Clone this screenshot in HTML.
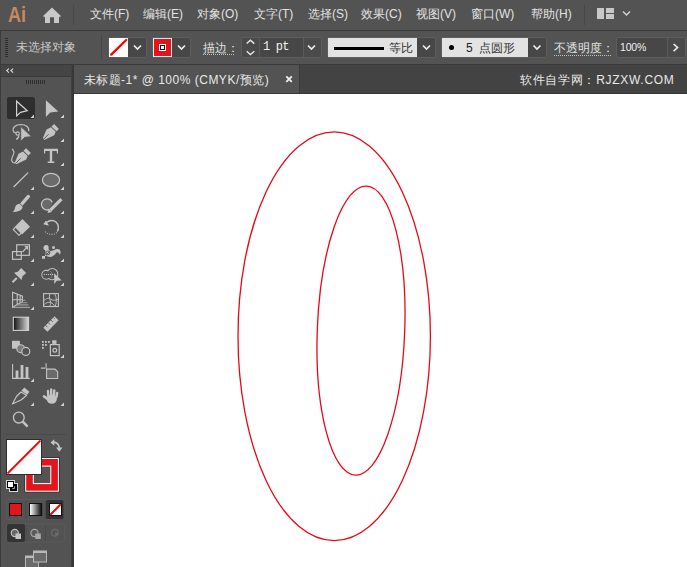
<!DOCTYPE html>
<html><head><meta charset="utf-8">
<style>
*{margin:0;padding:0;box-sizing:border-box}
html,body{width:687px;height:567px;overflow:hidden;background:#535353;font-family:"Liberation Sans",sans-serif;}
.a{position:absolute}
.t{position:absolute;white-space:nowrap;font-size:12px;line-height:14px;color:#e2e2e2}
.grp{position:absolute;border:1px solid #5d5d5d;border-radius:2px;background:#4a4a4a}
.dd{position:absolute;background:#474747}
</style></head><body>
<!-- menu bar -->
<div class="a" style="left:0;top:30px;width:687px;height:1px;background:#3b3b3b"></div>
<div class="t" style="left:8px;top:3.5px;font-size:22px;line-height:22px;color:#c48a60;font-weight:bold;transform:scaleX(0.82);transform-origin:0 0">Ai</div>
<svg class="a" style="left:0;top:0" width="687" height="30">
<path d="M52 7.6 L61.2 16.2 L59 16.9 L59 23 L54 23 L54 17.3 L50 17.3 L50 23 L45 23 L45 16.9 L42.8 16.2 Z" fill="#c8c8c8"/>
<rect x="73" y="5" width="1" height="20" fill="#474747"/>
<rect x="584" y="5" width="1" height="20" fill="#474747"/>
<rect x="597" y="8" width="7" height="11" fill="#c8c8c8"/>
<rect x="606" y="8" width="8" height="5" fill="#c8c8c8"/>
<rect x="606" y="14" width="8" height="5" fill="#c8c8c8"/>
<path d="M623 11.5 L626.5 15 L630 11.5" stroke="#d0d0d0" stroke-width="1.5" fill="none"/>
</svg>
<div class="t" style="left:90px;top:7px">文件(F)</div>
<div class="t" style="left:143px;top:7px">编辑(E)</div>
<div class="t" style="left:197px;top:7px">对象(O)</div>
<div class="t" style="left:254px;top:7px">文字(T)</div>
<div class="t" style="left:308px;top:7px">选择(S)</div>
<div class="t" style="left:361px;top:7px">效果(C)</div>
<div class="t" style="left:416px;top:7px">视图(V)</div>
<div class="t" style="left:471px;top:7px">窗口(W)</div>
<div class="t" style="left:531px;top:7px">帮助(H)</div>

<!-- options bar -->
<div class="a" style="left:0;top:31px;width:1px;height:33px;background:#3b3b3b"></div>
<div class="a" style="left:0;top:64px;width:687px;height:1px;background:#3a3a3a"></div>
<svg class="a" style="left:0;top:31px" width="687" height="33">
<g fill="#2e2e2e">
<rect x="5" y="7" width="3" height="1"/><rect x="5" y="9" width="3" height="1"/><rect x="5" y="11" width="3" height="1"/>
<rect x="5" y="13" width="3" height="1"/><rect x="5" y="15" width="3" height="1"/><rect x="5" y="17" width="3" height="1"/>
<rect x="5" y="19" width="3" height="1"/><rect x="5" y="21" width="3" height="1"/><rect x="5" y="23" width="3" height="1"/>
<rect x="5" y="25" width="3" height="1"/>
</g>
<rect x="101" y="4" width="1" height="25" fill="#474747"/>
</svg>
<div class="t" style="left:16px;top:39.5px;color:#c8c8c8">未选择对象</div>

<!-- fill swatch -->
<div class="grp" style="left:108px;top:37px;width:39px;height:21px;background:#474747"></div>
<div class="a" style="left:109px;top:38px;width:19px;height:19px;background:#fff"></div>
<svg class="a" style="left:0;top:0" width="687" height="65">
<line x1="111.2" y1="54.6" x2="126.2" y2="40" stroke="#ff0000" stroke-width="2.3" stroke-linecap="round"/>
<path d="M134 45.5 L137.5 49 L141 45.5" stroke="#ececec" stroke-width="1.7" fill="none"/>
<path d="M178 45.5 L181.5 49 L185 45.5" stroke="#ececec" stroke-width="1.7" fill="none"/>
</svg>
<!-- stroke swatch -->
<div class="grp" style="left:152px;top:37px;width:39px;height:21px;background:#474747"></div>
<div class="a" style="left:153px;top:38px;width:19px;height:19px;background:#e8e8e8"></div>
<div class="a" style="left:154px;top:39px;width:17px;height:17px;background:#e3141b"></div>
<div class="a" style="left:159px;top:44px;width:7px;height:7px;background:#fff"></div>
<div class="a" style="left:160px;top:45px;width:5px;height:5px;background:#1a1a1a"></div>
<div class="a" style="left:161px;top:46px;width:3px;height:3px;background:#f0f0f0"></div>
<svg class="a" style="left:0;top:0" width="687" height="65">
<path d="M178 45.5 L181.5 49 L185 45.5" stroke="#ececec" stroke-width="1.7" fill="none"/>
</svg>

<div class="t" style="left:203px;top:41px">描边：</div>
<svg class="a" style="left:0;top:0" width="687" height="65">
<line x1="203" y1="54.5" x2="235" y2="54.5" stroke="#c0c0c0" stroke-width="1" stroke-dasharray="1 1"/>
<line x1="554" y1="55.5" x2="611" y2="55.5" stroke="#c0c0c0" stroke-width="1" stroke-dasharray="1 1"/>
</svg>

<!-- stroke weight -->
<div class="grp" style="left:241px;top:37px;width:81px;height:21px;background:#4a4a4a"></div>
<div class="a" style="left:259px;top:38px;width:1px;height:19px;background:#5a5a5a"></div>
<div class="dd" style="left:260px;top:38px;width:43px;height:19px;background:#474747"></div>
<div class="a" style="left:303px;top:38px;width:1px;height:19px;background:#5a5a5a"></div>
<div class="t" style="left:263px;top:40px;font-family:'Liberation Mono',monospace;font-size:12px;letter-spacing:-0.8px;color:#f0f0f0">1 pt</div>
<svg class="a" style="left:0;top:0" width="687" height="65">
<path d="M246.7 43.6 L250.4 40.2 L254.3 43.6" stroke="#e8e8e8" stroke-width="1.4" fill="none"/>
<path d="M246.7 51.2 L250.4 54.6 L254.3 51.2" stroke="#e8e8e8" stroke-width="1.4" fill="none"/>
<path d="M308 45.5 L311.5 49 L315 45.5" stroke="#ececec" stroke-width="1.7" fill="none"/>
</svg>

<!-- stroke profile -->
<div class="grp" style="left:327px;top:37px;width:109px;height:21px;background:#474747"></div>
<div class="a" style="left:328px;top:38px;width:89px;height:19px;background:#e3e3e3"></div>
<div class="a" style="left:334px;top:47px;width:50px;height:3px;background:#000"></div>
<div class="t" style="left:389px;top:41px;color:#333">等比</div>
<svg class="a" style="left:0;top:0" width="687" height="65">
<path d="M423 45.5 L426.5 49 L430 45.5" stroke="#ececec" stroke-width="1.7" fill="none"/>
</svg>

<!-- brush -->
<div class="grp" style="left:441px;top:37px;width:106px;height:21px;background:#474747"></div>
<div class="a" style="left:442px;top:38px;width:86px;height:19px;background:#e3e3e3"></div>
<div class="a" style="left:449px;top:45px;width:5px;height:5px;border-radius:50%;background:#000"></div>
<div class="t" style="left:466px;top:41px;color:#222">5</div>
<div class="t" style="left:479px;top:41px;color:#333">点圆形</div>
<svg class="a" style="left:0;top:0" width="687" height="65">
<path d="M533.5 45.5 L537 49 L540.5 45.5" stroke="#ececec" stroke-width="1.7" fill="none"/>
</svg>

<div class="t" style="left:554px;top:41px">不透明度：</div>
<!-- opacity -->
<div class="grp" style="left:616px;top:37px;width:70px;height:21px;background:#474747"></div>
<div class="a" style="left:667px;top:38px;width:1px;height:19px;background:#5a5a5a"></div>
<div class="a" style="left:668px;top:38px;width:17px;height:19px;background:#4a4a4a;border-radius:0 2px 2px 0"></div>
<div class="t" style="left:620px;top:40px;font-size:10.5px;color:#f0f0f0;letter-spacing:-0.2px">100%</div>
<svg class="a" style="left:0;top:0" width="687" height="65">
<path d="M673.6 44 L677.6 47.6 L673.6 51.2" stroke="#ececec" stroke-width="1.6" fill="none"/>
</svg>

<!-- toolbar -->
<div class="a" style="left:0;top:65px;width:71px;height:11px;background:#454545"></div>
<div class="a" style="left:0;top:76px;width:71px;height:1px;background:#3a3a3a"></div>
<div class="a" style="left:0;top:65px;width:1px;height:502px;background:#3c3c3c"></div>
<div class="a" style="left:71px;top:65px;width:1px;height:502px;background:#404040"></div>
<div class="a" style="left:72px;top:65px;width:2px;height:502px;background:#383838"></div>
<svg class="a" style="left:0;top:0" width="74" height="567">
<path d="M9 68 L5.8 70.6 L9 73.2 L9 71.9 L7.5 70.6 L9 69.3 Z M13.2 68 L10 70.6 L13.2 73.2 L13.2 71.9 L11.7 70.6 L13.2 69.3 Z" fill="#dcdcdc"/>
<g fill="#2f2f2f"><rect x="26" y="80" width="1" height="4"/><rect x="28" y="80" width="1" height="4"/><rect x="30" y="80" width="1" height="4"/><rect x="32" y="80" width="1" height="4"/><rect x="34" y="80" width="1" height="4"/><rect x="36" y="80" width="1" height="4"/><rect x="38" y="80" width="1" height="4"/><rect x="40" y="80" width="1" height="4"/><rect x="42" y="80" width="1" height="4"/><rect x="44" y="80" width="1" height="4"/></g>
<rect x="7" y="97" width="28" height="22" rx="2.5" fill="#2e2e2e"/>
<!-- corner triangles -->
<g fill="#d2d2d2">
<path d="M34 114.5V118H30.5Z"/><path d="M64 114.5V118H60.5Z"/>
<path d="M64 138.5V142H60.5Z"/>
<path d="M64 162.5V166H60.5Z"/>
<path d="M34 186.5V190H30.5Z"/><path d="M64 186.5V190H60.5Z"/>
<path d="M34 210.5V214H30.5Z"/><path d="M64 210.5V214H60.5Z"/>
<path d="M34 234.5V238H30.5Z"/><path d="M64 234.5V238H60.5Z"/>
<path d="M34 258.5V262H30.5Z"/><path d="M64 258.5V262H60.5Z"/>
<path d="M34 282.5V286H30.5Z"/><path d="M64 282.5V286H60.5Z"/>
<path d="M34 306.5V310H30.5Z"/>
<path d="M64 354.5V358H60.5Z"/>
<path d="M34 378.5V382H30.5Z"/>
<path d="M34 402.5V406H30.5Z"/><path d="M64 402.5V406H60.5Z"/>
</g>
<g fill="#c4c4c4" stroke="none">
<!-- selection -->
<path d="M16.6 101.2 L16.6 116 L20.6 112.3 L27.2 110.7 Z" fill="none" stroke="#d0d0d0" stroke-width="1.2" stroke-linejoin="miter"/>
<!-- direct selection -->
<path d="M45.9 100.3 L45.9 117 L50.2 112.6 L58.3 111.4 Z"/>
<!-- lasso -->
<path d="M28.6 131.2 C29.6 127.5 26 124.6 20.7 124.5 C15.5 124.6 12.3 127.5 13.1 130.6 C13.5 132 14.5 132.8 16 133" fill="none" stroke="#c4c4c4" stroke-width="1.2"/>
<circle cx="17.6" cy="133.6" r="1.7" fill="none" stroke="#c4c4c4" stroke-width="1.1"/>
<path d="M18.8 135.2 C18.9 137 17.8 138.6 16.2 139.6" fill="none" stroke="#c4c4c4" stroke-width="1.2"/>
<path d="M20.8 126.6 L20.8 141.2 L24.6 137.3 L31.4 136.6 Z" stroke="#535353" stroke-width="0.7"/>
<!-- pen -->
<path d="M54.1 124 L58.9 128.9 L56.4 131.3 L51.5 126.6 Z"/>
<path d="M51 127.2 L55.7 131.8 L54.2 135.3 L44.3 140 L42.9 138 L46.5 129.5 Z"/>
<path d="M43.9 139 L48.6 134.2" stroke="#535353" stroke-width="0.9"/>
<!-- curvature pen -->
<g transform="translate(-28 24.2)">
<path d="M54.1 124 L58.9 128.9 L56.4 131.3 L51.5 126.6 Z"/>
<path d="M51 127.2 L55.7 131.8 L54.2 135.3 L44.3 140 L42.9 138 L46.5 129.5 Z"/>
<path d="M43.9 139 L48.6 134.2" stroke="#535353" stroke-width="0.9"/>
</g>
<path d="M12 149 C14 150.5 14.5 152 13.5 154.5 C11.5 158 11 161 13 162.5 C14 163 15 163 16 162.5" fill="none" stroke="#c4c4c4" stroke-width="1.1"/>
<!-- type -->
<path d="M44 148.8 H58 V153.5 H56.8 V151 H52.2 V161.6 H54.3 V163 H47.7 V161.6 H49.8 V151 H45.2 V153.5 H44 Z"/>
<!-- line -->
<path d="M13.6 187 L28.1 172.6" stroke="#c4c4c4" stroke-width="1.3"/>
<!-- ellipse -->
<ellipse cx="51" cy="180" rx="8.6" ry="6.6" fill="#6b6b6b" stroke="#c4c4c4" stroke-width="1.2"/>
<!-- paintbrush -->
<path d="M28.4 196.4 L21.5 204.3" stroke="#c4c4c4" stroke-width="3.3" stroke-linecap="round"/>
<path d="M19.8 203.8 C17.5 203.8 15.6 205.2 15.1 207.4 C14.6 209.5 13.9 210.9 12.7 212 C16 212.3 19.6 211.5 21.4 209.6 C22.9 207.9 22.7 205.8 22.2 205.1 Z"/>
<path d="M19.6 203.4 L23 206.6" stroke="#535353" stroke-width="0.9"/>
<!-- shaper -->
<path d="M50.5 208.8 A5.6 5.6 0 1 1 52.2 202.3" fill="#6a6a6a" stroke="#c4c4c4" stroke-width="1.3"/>
<path d="M61.6 199 L50.4 210.2" stroke="#535353" stroke-width="5"/>
<path d="M61.4 199.2 L50.4 210.2" stroke="#c4c4c4" stroke-width="3.3"/>
<path d="M48.7 208.6 L52 211.9 L47.6 212.9 Z"/>
<!-- eraser -->
<path d="M22.4 219.1 L30 226.7 L22 234.4 L15.6 228 L14.6 227 Z"/>
<path d="M15.3 227.3 L13.3 229.6 L18.9 235.3 L21.2 233.3" fill="none" stroke="#c4c4c4" stroke-width="1.2"/>
<!-- rotate -->
<path d="M47 222.2 C49.5 220 53.5 219.8 56 222 C58.8 224.5 59 229 57.3 231.5" fill="none" stroke="#c4c4c4" stroke-width="1.4"/>
<path d="M56.8 232.5 C54 235 48 235.5 44.5 231" fill="none" stroke="#c4c4c4" stroke-width="1.1" stroke-dasharray="0.9 1.5"/>
<path d="M43.3 224.3 L46 220.5 L49 225.8 Z"/>
<!-- scale -->
<rect x="16.7" y="244.8" width="12.7" height="10.5" fill="none" stroke="#c4c4c4" stroke-width="1.2"/>
<rect x="12.5" y="251.6" width="8.8" height="7.7" fill="none" stroke="#c4c4c4" stroke-width="1.2"/>
<path d="M22.5 252 L27.3 247" stroke="#c4c4c4" stroke-width="1.2"/>
<path d="M24.2 246.2 L28.2 246 L28 250 Z"/>
<!-- puppet warp -->
<path d="M43.5 249 C43 246 45 244.5 47 245 C48.5 245.5 49 247 48.5 249 C49 251 51 251.5 53 250.5 C55 249 57 248.5 59 249.3 C60.8 250.3 61 253 59.8 255 C59.2 253 58 252 56.5 252.5 C55 254.5 53 256.8 50 257 C47 257 45 255.5 45.5 252.5 C45.8 251 45 250 43.5 249 Z"/>
<path d="M45 256.2 L52.3 248.8" stroke="#535353" stroke-width="1"/>
<path d="M43.5 257.5 L46 255" stroke="#c4c4c4" stroke-width="1"/>
<rect x="42" y="256" width="3" height="2.8"/>
<circle cx="47.9" cy="252.9" r="1.9" fill="none" stroke="#535353" stroke-width="0.9"/>
<circle cx="53.5" cy="247.6" r="1.5"/>
<!-- pin -->
<path d="M21.1 268 L26.2 273.1 L22.5 276.2 L21.5 280 L14.1 272.8 L17.8 271.8 Z"/>
<path d="M16.8 278 L12.5 282.3" stroke="#c4c4c4" stroke-width="2"/>
<!-- shape builder -->
<circle cx="46.3" cy="274.8" r="4.4" fill="none" stroke="#c4c4c4" stroke-width="1.1"/>
<circle cx="52.2" cy="274.2" r="5.6" fill="none" stroke="#c4c4c4" stroke-width="1.1"/>
<circle cx="46.3" cy="274.8" r="3.8" fill="#535353"/>
<circle cx="52.2" cy="274.2" r="5" fill="#535353"/>
<path d="M50 271 A4.4 4.4 0 0 1 50 278.5" fill="none" stroke="#8a8a8a" stroke-width="0.8"/>
<g fill="#c4c4c4"><circle cx="44.3" cy="274.4" r="0.6"/><circle cx="46.4" cy="274.4" r="0.6"/><circle cx="48.4" cy="274.4" r="0.6"/><circle cx="50.5" cy="274.4" r="0.6"/><circle cx="52.6" cy="274.4" r="0.6"/></g>
<path d="M54.1 273.3 L54.3 284 L56.8 280.8 L61.8 280.5 Z"/>
<!-- perspective grid -->
<path d="M12.6 292.2 L22.4 296.2 L22.4 301.8 L12.6 307.3 Z M17.2 294.1 V304.6 M20.1 295.3 V303 M12.6 299.8 L22.4 299.6" fill="none" stroke="#c4c4c4" stroke-width="1.1"/>
<path d="M22.5 300.3 H25.5 M20.2 302.8 H27.2 M17.4 304.9 H28.4 M13 307.4 H30" stroke="#9c9c9c" stroke-width="1.1"/>
<!-- mesh -->
<rect x="43.6" y="293.6" width="14.8" height="12.9" fill="none" stroke="#c4c4c4" stroke-width="1.1"/>
<path d="M44 300.5 C46.5 298.3 48.5 297.5 50.5 299 C52.5 300.8 55.5 300.6 58 299.3 M49.8 294 C48.6 297 50.2 300 50.6 302 C51 304 50 305.5 49.2 306.5 M54.8 294 C56.6 297.5 57 301.5 55.2 306.5 M44 304.6 C46 302.6 48.2 302 50.6 302.5 C52.6 303 54 304.8 54.8 306.5" fill="none" stroke="#c4c4c4" stroke-width="0.9"/>
<!-- gradient -->
<defs><linearGradient id="g1" x1="0" x2="1" y1="0" y2="0"><stop offset="0" stop-color="#111"/><stop offset="1" stop-color="#d8d8d8"/></linearGradient>
<linearGradient id="g2" x1="0" x2="1" y1="0" y2="0"><stop offset="0" stop-color="#fff"/><stop offset="1" stop-color="#111"/></linearGradient></defs>
<rect x="13.3" y="317.2" width="15.3" height="13.2" fill="url(#g1)" stroke="#d0d0d0" stroke-width="1.1"/>
<!-- ruler -->
<path d="M47.4 331.8 L43.3 327.7 L54.5 316.2 L58.6 320.3 Z"/>
<path d="M45.6 325.4 L47.4 327.2 M48.2 322.7 L50 324.5 M50.8 320 L52.6 321.8 M53.4 317.4 L54.6 318.6" stroke="#535353" stroke-width="0.9"/>
<!-- blend -->
<rect x="12" y="340.8" width="7.9" height="7.9"/>
<circle cx="20.7" cy="348.7" r="3.9" fill="#7a7a7a" stroke="#c4c4c4" stroke-width="1.1"/>
<circle cx="25.8" cy="351.4" r="4" fill="#535353" stroke="#c4c4c4" stroke-width="1.2"/>
<!-- symbol sprayer -->
<rect x="42" y="341" width="1.8" height="1.8"/><rect x="45" y="341" width="1.8" height="1.8"/><rect x="48" y="341" width="1.8" height="1.8"/>
<rect x="42" y="344" width="1.8" height="1.8"/><rect x="45" y="344" width="1.8" height="1.8"/>
<rect x="42" y="347" width="1.8" height="1.8"/>
<rect x="52.2" y="340.3" width="4.3" height="3.6"/>
<rect x="50.4" y="344.6" width="8.8" height="11" fill="none" stroke="#c4c4c4" stroke-width="1.2"/>
<circle cx="54.8" cy="350.3" r="1.9" fill="none" stroke="#c4c4c4" stroke-width="1.2"/>
<!-- column graph -->
<path d="M12.6 364 V378.4 H29.8" fill="none" stroke="#c4c4c4" stroke-width="1.1"/>
<rect x="15.6" y="370.5" width="2.8" height="7.5"/><rect x="20.6" y="365" width="2.8" height="13"/><rect x="25.6" y="367" width="2.8" height="11"/>
<!-- artboard -->
<path d="M46.1 363.3 V369 M40.9 368.1 H45" stroke="#c4c4c4" stroke-width="1.1"/>
<path d="M46.6 369.1 H55 L57.7 371.8 V378.5 H46.6 Z" fill="#6a6a6a" stroke="#c4c4c4" stroke-width="1.1"/>
<!-- pencil / slice -->
<path d="M24.3 387.5 L29.4 391.8 L27.2 394.8 L21.4 390.8 Z"/>
<path d="M21 392 L26.6 395.3 L21.5 399.8 L12.4 404 L16.6 396.2 Z" fill="none" stroke="#c4c4c4" stroke-width="1.2" stroke-linejoin="round"/>
<!-- hand -->
<g stroke="#c4c4c4" stroke-linecap="round" stroke-width="2.4">
<path d="M48.3 397 L48 391 M51.2 396 L51.2 389.5 M54 396 L54.3 390.5 M56.5 397 L57.2 393"/>
<path d="M49 400 L44 396.4" stroke-width="2.6"/>
</g>
<ellipse cx="51.8" cy="399.2" rx="5" ry="4.6"/>
<!-- zoom -->
<circle cx="18.8" cy="417.6" r="5.4" fill="none" stroke="#c4c4c4" stroke-width="1.3"/>
<path d="M22.8 421.6 L27.6 426.6" stroke="#c4c4c4" stroke-width="2.4"/>
</g>
<rect x="6" y="434" width="60" height="1" fill="#4a4a4a"/>
<!-- fill & stroke -->
<rect x="24.4" y="457.2" width="35.3" height="35.3" fill="#2e2e2e"/>
<rect x="25.2" y="458" width="33.7" height="33.7" fill="#fff"/>
<rect x="26.2" y="459" width="31.7" height="31.7" fill="#e3141b"/>
<rect x="32.8" y="465.6" width="18.5" height="18.5" fill="#fff"/>
<rect x="33.8" y="466.6" width="16.5" height="16.5" fill="#535353"/>
<rect x="6" y="439" width="36" height="36" fill="#2e2e2e"/>
<rect x="7" y="440" width="34" height="34" fill="#fff"/>
<path d="M7.5 473.5 L40.5 440.5" stroke="#ff0000" stroke-width="1.8"/>
<!-- swap -->
<path d="M53 442.3 C56.5 442 59 444.5 59.3 448" fill="none" stroke="#c4c4c4" stroke-width="1.8"/>
<path d="M50.5 442.5 L54.3 439.3 L54.3 445.7 Z M56 447.5 L62.5 447.5 L59.3 451.8 Z" fill="#c4c4c4"/>
<!-- default -->
<rect x="6" y="480" width="9" height="9" fill="#d4d4d4"/><rect x="9" y="483" width="9" height="9" fill="#d4d4d4"/>
<rect x="7" y="481" width="7" height="7" fill="#000"/><rect x="10" y="484" width="7" height="7" fill="#000"/>
<rect x="8" y="482" width="5" height="5" fill="#fff"/>
<path d="M14.6 486.2 V488.6 H12.2" fill="none" stroke="#d8d8d8" stroke-width="0.8"/>
<!-- color mode group -->
<rect x="6.5" y="499.5" width="57" height="19.5" rx="2" fill="#535353" stroke="#5b5b5b" stroke-width="1"/>
<rect x="46" y="500" width="17.5" height="19" rx="1.5" fill="#333"/>
<rect x="25.3" y="500" width="1" height="19" fill="#4b4b4b"/><rect x="45" y="500" width="1" height="19" fill="#4b4b4b"/>
<rect x="9" y="503" width="13" height="13" fill="#111"/><rect x="10" y="504" width="11" height="11" fill="#e3141b"/>
<rect x="29" y="503" width="13.2" height="13" fill="#111"/><rect x="30" y="504" width="11.2" height="11" fill="url(#g2)"/>
<rect x="49" y="503" width="13" height="13" fill="#111"/><rect x="50" y="504" width="11" height="11" fill="#fff"/>
<path d="M50.3 514.7 L60.7 504.3" stroke="#ff0000" stroke-width="2"/>
<!-- draw mode group -->
<rect x="7" y="524" width="57.5" height="18" rx="2" fill="#535353" stroke="#5a5a5a" stroke-width="1"/>
<rect x="7" y="524" width="18" height="18" rx="2" fill="#333"/>
<rect x="25.8" y="525" width="1" height="16" fill="#4b4b4b"/><rect x="45" y="525" width="1" height="16" fill="#4b4b4b"/>
<circle cx="14.8" cy="533" r="3.6" fill="#666" stroke="#c4c4c4" stroke-width="1.1"/>
<rect x="15.5" y="533.5" width="5.5" height="5.5" fill="#c4c4c4"/>
<circle cx="34.5" cy="533" r="3.6" fill="#5a5a5a" stroke="#a8a8a8" stroke-width="1.1"/>
<rect x="35.3" y="533.5" width="5.5" height="5.5" fill="#a8a8a8"/>
<circle cx="55" cy="532.8" r="3.4" fill="none" stroke="#6a6a6a" stroke-width="1.1"/>
<rect x="55" y="532.8" width="3" height="3" fill="#6a6a6a"/>
<!-- screen mode -->
<rect x="25.5" y="556" width="13" height="12" fill="#6a6a6a" stroke="#b8b8b8" stroke-width="1"/>
<rect x="25.5" y="556" width="13" height="2" fill="#b8b8b8"/>
<rect x="33.5" y="551" width="13" height="11" fill="#6a6a6a" stroke="#b8b8b8" stroke-width="1"/>
<rect x="33.5" y="551" width="13" height="2" fill="#b8b8b8"/>
</svg>


<!-- doc tab bar -->
<div class="a" style="left:74px;top:65px;width:613px;height:28px;background:#434343"></div>
<div class="a" style="left:74px;top:65px;width:225px;height:28px;background:#535353"></div>
<div class="a" style="left:299px;top:65px;width:1px;height:28px;background:#3c3c3c"></div>
<div class="a" style="left:74px;top:93px;width:613px;height:1px;background:#383838"></div>
<div class="t" style="left:83.5px;top:72.8px;color:#e8e8e8;letter-spacing:0.5px">未标题-1* @ 100% (CMYK/预览)</div>
<svg class="a" style="left:0;top:0" width="687" height="94">
<path d="M286.3 76.3 L291.8 81.8 M291.8 76.3 L286.3 81.8" stroke="#ececec" stroke-width="1.9"/>
</svg>
<div class="t" style="left:520px;top:72.5px;color:#e8e8e8;letter-spacing:0.7px">软件自学网：RJZXW.COM</div>

<!-- canvas -->
<div class="a" style="left:74px;top:94px;width:613px;height:473px;background:#fff"></div>
<svg class="a" style="left:0;top:0" width="687" height="567">
<g fill="none" stroke="#e50a18" stroke-width="1.3">
<ellipse cx="334.2" cy="336.2" rx="96.2" ry="204.4"/>
<ellipse cx="361" cy="330.65" rx="43.7" ry="144.65" transform="rotate(2.2 361 330.65)"/>
</g>
</svg>
</body></html>
